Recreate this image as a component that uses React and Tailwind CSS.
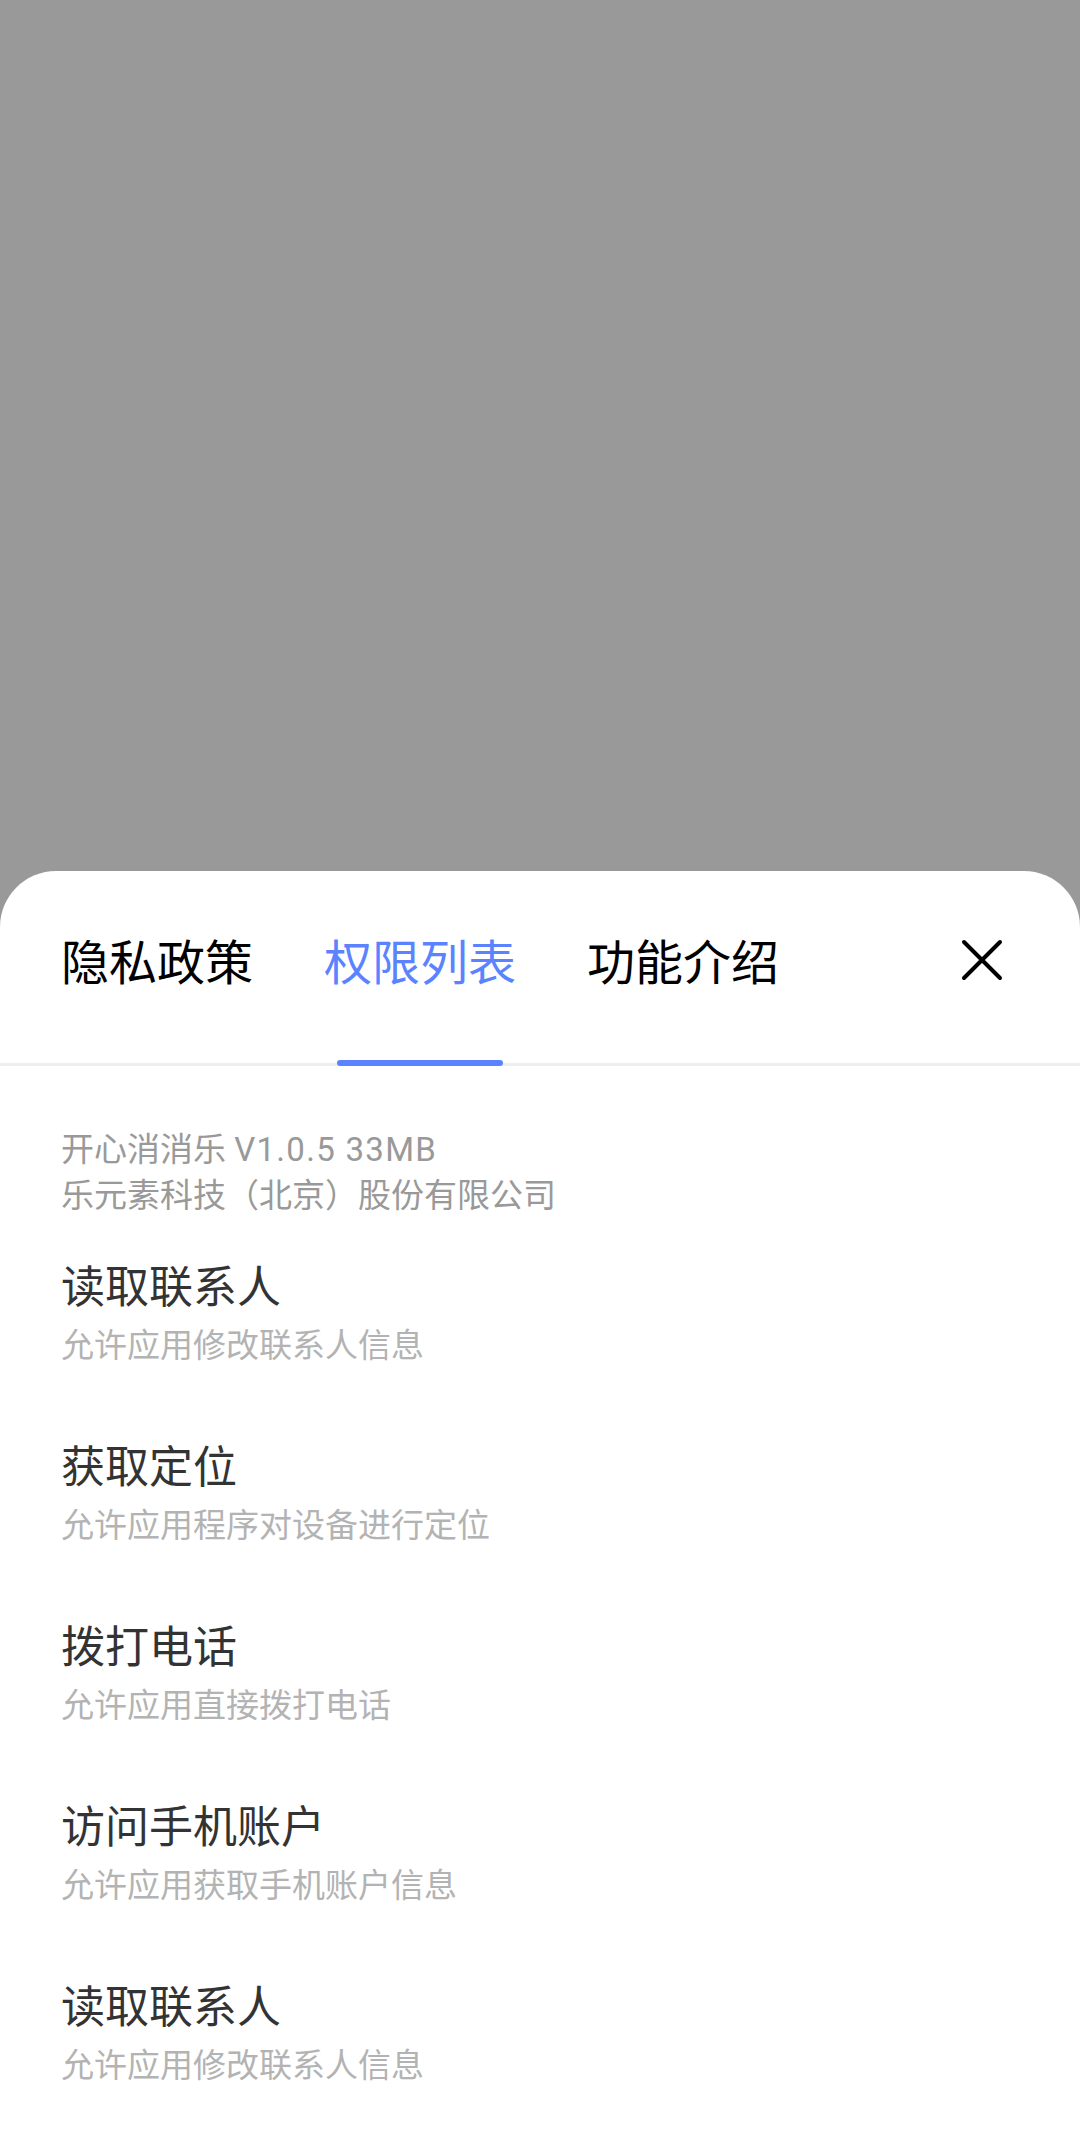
import React from "react";

const FONT = { fontFamily: "Roboto, 'Noto Sans CJK SC', sans-serif" };

const TABS = ["隐私政策", "权限列表", "功能介绍"];

const PERMISSIONS = [
  { title: "读取联系人", desc: "允许应用修改联系人信息" },
  { title: "获取定位", desc: "允许应用程序对设备进行定位" },
  { title: "拨打电话", desc: "允许应用直接拨打电话" },
  { title: "访问手机账户", desc: "允许应用获取手机账户信息" },
  { title: "读取联系人", desc: "允许应用修改联系人信息" },
];

const CloseIcon = () => (
  <svg width="44" height="44" viewBox="0 0 44 44" fill="none">
    <path
      d="M4 4L40 40M40 4L4 40"
      stroke="#000"
      strokeWidth="4"
      strokeLinecap="round"
    />
  </svg>
);

const App = () => {
  const active = 1;

  return (
    <div className="h-[2143px] bg-[#999999] flex flex-col overflow-hidden" style={FONT}>
      {/* Dimmed backdrop */}
      <div className="h-[871px] shrink-0" />

      {/* Bottom sheet */}
      <div className="flex-1 bg-white rounded-t-[56px] flex flex-col">
        {/* Tabs header */}
        <div className="h-[195px] border-b-[3px] border-[#eeeeee] flex items-stretch pl-[61px] pr-[76px]">
          <div className="flex gap-[71px]">
            {TABS.map((tab, i) => (
              <div key={tab} className="w-[192px] flex flex-col items-center justify-between pt-[69px]">
                <span
                  className={
                    "text-[48px] leading-[48px] whitespace-nowrap " +
                    (i === active ? "text-[#5b83ff]" : "text-black")
                  }
                >
                  {tab}
                </span>
                {i === active && (
                  <div className="relative top-[3px] w-[166px] h-[6px] rounded-full bg-[#5b83ff]" />
                )}
              </div>
            ))}
          </div>
          <button className="ml-auto self-start mt-[67px]">
            <CloseIcon />
          </button>
        </div>

        {/* App info */}
        <div className="px-[61px] pt-[61px] text-[33px] leading-[46px] text-[#999999]">
          <p>
            开心消消乐 <span className="tracking-[1.3px]">V1.0.5 33MB</span>
          </p>
          <p>乐元素科技（北京）股份有限公司</p>
        </div>

        {/* Permission list */}
        <div className="px-[61px] mt-[40px] flex flex-col gap-[64px]">
          {PERMISSIONS.map((p, i) => (
            <div key={i} className="flex flex-col">
              <span className="text-[44px] leading-[58px] text-[#333333]">{p.title}</span>
              <span className="text-[33px] leading-[58px] text-[#b3b3b3]">{p.desc}</span>
            </div>
          ))}
        </div>
      </div>
    </div>
  );
};

export default App;
